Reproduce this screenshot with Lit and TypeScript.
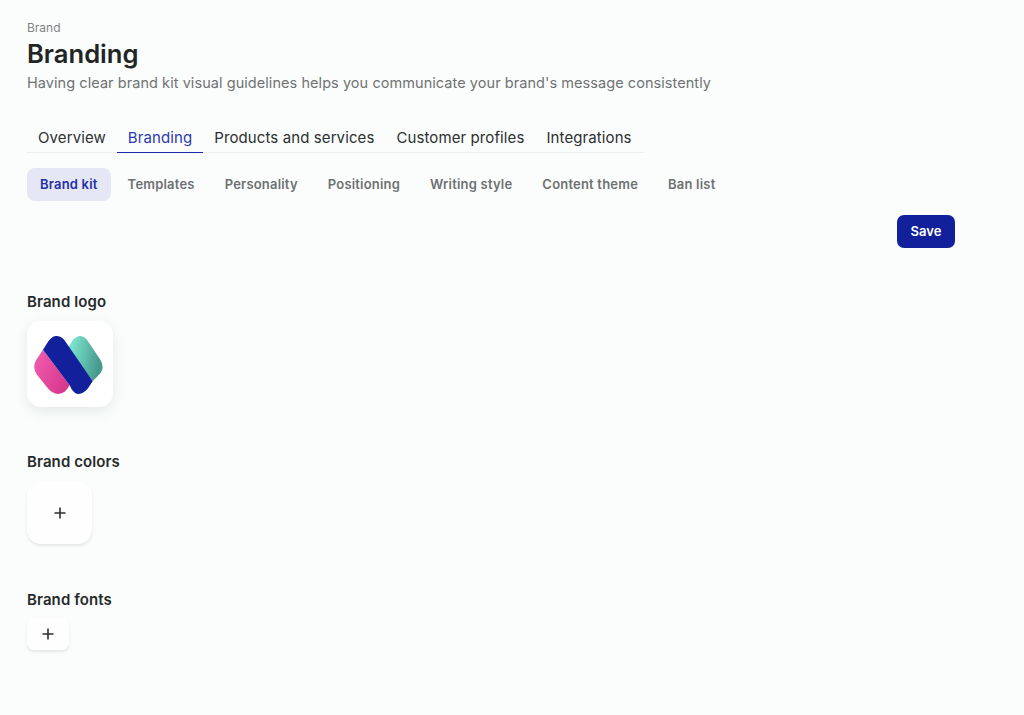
import { LitElement, html, css, svg } from "lit";
import { customElement } from "lit/decorators.js";

const mainTabs = ["Overview", "Branding", "Products and services", "Customer profiles", "Integrations"];
const subTabs = ["Brand kit", "Templates", "Personality", "Positioning", "Writing style", "Content theme", "Ban list"];

const plus = svg`<svg class="plus" viewBox="0 0 12 12"><path d="M6 .5v11M.5 6h11" /></svg>`;

const logo = svg`
  <svg class="logo" viewBox="0 -21 258 258">
    <defs>
      <linearGradient id="pink" x1="0" y1="0" x2="1" y2="0.6">
        <stop offset="0" stop-color="#f05fb0" />
        <stop offset="1" stop-color="#d8398f" />
      </linearGradient>
      <linearGradient id="teal" x1="0" y1="0" x2="1" y2="0.3">
        <stop offset="0.2" stop-color="#78dfca" />
        <stop offset="1" stop-color="#479a8b" />
      </linearGradient>
    </defs>
    <path fill="url(#pink)" d="M48 65 L28 95 Q14 116 30 140 L60 178 Q75 198 94 198 Q115 197 128 172 Z" />
    <path fill="url(#teal)" d="M122 62 L136 38 Q148 24 160 24 Q172 25 182 38 L220 95 Q234 118 220 136 L197 160 Z" />
    <path fill="#12209b" d="M48 65 L64 40 Q76 24 88 24 Q102 24 112 36 L197 160 L182 182 Q168 198 152 198 Q138 196 128 172 Z" />
  </svg>
`;

@customElement("app-root")
export class AppRoot extends LitElement {
  static styles = css`
    :host {
      display: block;
      min-height: 715px;
      box-sizing: border-box;
      padding: 20px 69px 0 27px;
      background: #fbfdfd;
      color: #212525;
      font-family: Inter, "Noto Sans", sans-serif;
    }

    .crumb {
      font-size: 12px;
      line-height: 16px;
      color: #808484;
    }

    h1 {
      margin: 0;
      font-size: 25.6px;
      line-height: 36px;
      font-weight: 600;
    }

    .intro {
      margin: 0;
      font-size: 14.5px;
      line-height: 22px;
      color: #6f7373;
      letter-spacing: 0.06px;
    }

    .tabs {
      display: flex;
      width: 617px;
      height: 33px;
      margin-top: 26px;
      box-sizing: border-box;
      border-bottom: 1px solid #eceeee;
    }

    .tab {
      height: 33px;
      box-sizing: border-box;
      padding: 6px 11px 0;
      font-size: 15px;
      line-height: 23px;
      letter-spacing: 0.1px;
      color: #2b2f2f;
    }

    .tab.active {
      color: #2a3ab0;
      border-bottom: 1.5px solid #1a2aa8;
    }

    .pills {
      display: flex;
      gap: 4px;
      margin-top: 15px;
    }

    .pill {
      height: 33px;
      padding: 0 13px;
      border-radius: 8px;
      font-size: 13px;
      font-weight: 600;
      line-height: 32px;
      letter-spacing: 0.2px;
      color: #6d7171;
    }

    .pill.active {
      background: #e5e7f5;
      color: #1f2fa5;
    }

    .actions {
      display: flex;
      justify-content: flex-end;
      margin-top: 14px;
    }

    .save {
      width: 58px;
      height: 33px;
      padding: 0;
      border: 0;
      border-radius: 7px;
      background: #12209b;
      color: #fff;
      font: 600 13px/33px Inter, "Noto Sans", sans-serif;
    }

    h2 {
      margin: 43px 0 8px;
      font-size: 15px;
      line-height: 22px;
      font-weight: 600;
      letter-spacing: 0.1px;
      color: #262a2a;
    }

    .tile {
      display: flex;
      align-items: center;
      justify-content: center;
      box-sizing: border-box;
      background: #fefefe;
      border-radius: 14px;
      box-shadow: 0 2px 3px rgba(40, 50, 50, 0.11);
    }

    .tile.logo-tile {
      width: 86px;
      height: 86px;
      background: #fff;
      box-shadow: 0 4px 14px rgba(40, 50, 50, 0.1);
    }

    .logo {
      width: 86px;
      height: 86px;
      display: block;
    }

    .tile.colors {
      width: 65px;
      height: 63px;
    }

    .tile.fonts {
      width: 42px;
      height: 32px;
      border-radius: 7px;
    }

    .plus {
      width: 12px;
      height: 12px;
      fill: none;
      stroke: #2b2f2f;
      stroke-width: 1.6;
    }

    .colors-title {
      margin-top: 44px;
    }

    .fonts-title {
      margin-top: 45px;
      margin-bottom: 7px;
    }
  `;

  render() {
    return html`
      <div class="crumb">Brand</div>
      <h1>Branding</h1>
      <p class="intro">Having clear brand kit visual guidelines helps you communicate your brand's message consistently</p>

      <div class="tabs">
        ${mainTabs.map((t) => html`<div class="tab ${t === "Branding" ? "active" : ""}">${t}</div>`)}
      </div>

      <div class="pills">
        ${subTabs.map((t) => html`<div class="pill ${t === "Brand kit" ? "active" : ""}">${t}</div>`)}
      </div>

      <div class="actions"><button class="save">Save</button></div>

      <h2>Brand logo</h2>
      <div class="tile logo-tile">${logo}</div>

      <h2 class="colors-title">Brand colors</h2>
      <div class="tile colors">${plus}</div>

      <h2 class="fonts-title">Brand fonts</h2>
      <div class="tile fonts">${plus}</div>
    `;
  }
}
